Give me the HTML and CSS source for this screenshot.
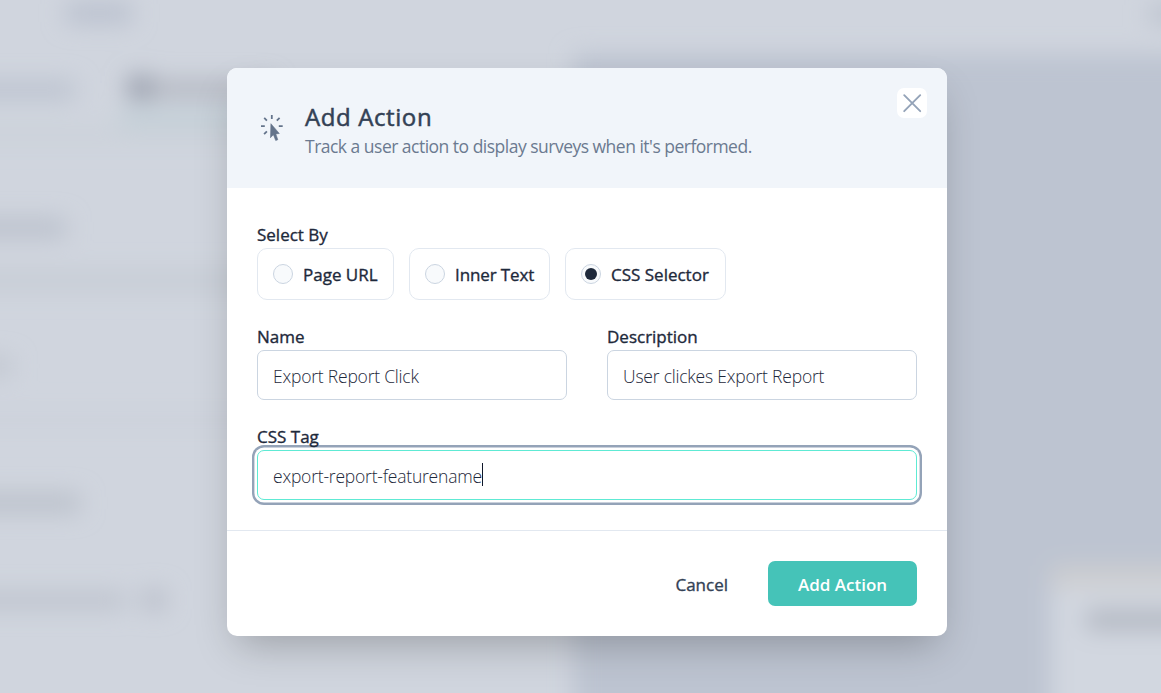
FILE: index.html
```html
<!DOCTYPE html>
<html lang="en">
<head>
<meta charset="utf-8">
<title>Add Action</title>
<link rel="stylesheet" href="styles.css">
</head>
<body>
<svg class="backdrop" viewBox="0 0 1161 693" aria-hidden="true">
  <defs>
    <filter id="soft" x="-20%" y="-20%" width="140%" height="140%"><feGaussianBlur stdDeviation="11.5"/></filter>
  </defs>
  <rect width="1161" height="693" fill="#d0d5de"/>
  <g filter="url(#soft)">
    <rect x="574" y="54" width="700" height="760" fill="#bdc4d1"/>
    <rect x="66" y="3" width="66" height="20" fill="#b9c0ce"/>
    <rect x="1150" y="4" width="50" height="20" fill="#bcc2ce"/>
    <rect x="-40" y="81" width="115" height="18" fill="#bbc2cf"/>
    <rect x="128" y="76" width="24" height="24" fill="#979dab"/>
    <rect x="152" y="80" width="120" height="18" fill="#b3b7c1"/>
    <rect x="120" y="112" width="140" height="12" fill="#becdd5"/>
    <rect x="-40" y="128" width="600" height="14" fill="#cbd1d9"/>
    <rect x="-40" y="219" width="106" height="18" fill="#b9bfcb"/>
    <rect x="-40" y="270" width="600" height="22" fill="#c7cdd6"/>
    <rect x="-40" y="358" width="52" height="16" fill="#bfc4ce"/>
    <rect x="-40" y="410" width="600" height="20" fill="#cdd2db"/>
    <rect x="-40" y="494" width="120" height="18" fill="#b9bfc9"/>
    <rect x="-40" y="592" width="166" height="17" fill="#bec3cd"/>
    <rect x="142" y="590" width="24" height="20" fill="#b9bec9"/>
    <rect x="1051" y="572" width="160" height="180" fill="#d2d7e0"/>
    <rect x="1051" y="566" width="160" height="22" fill="#cdced0"/>
    <rect x="1086" y="610" width="112" height="20" fill="#b0b5bf"/>
  </g>
</svg>
<main class="stage">
  <section class="modal" role="dialog" aria-labelledby="title">
    <header class="header">
      <svg class="click-icon" viewBox="0 0 24 28" aria-hidden="true">
        <path class="rays" d="M11.8 1v4M4.2 3.9l2.7 2.8M19.6 3.9l-2.8 2.8M1 12.2h3.8M18.8 12.2h3.9M6.9 17.4l-2.8 2.8"/>
        <path class="pointer" d="M10.9 9.7l8.4 9.8-3.5.4 2 5.8-2.1.8-2.3-5.8-2.9 3z"/>
      </svg>
      <div class="heading">
        <h1 class="title" id="title">Add Action</h1>
        <p class="subtitle">Track a user action to display surveys when it's performed.</p>
      </div>
      <button class="close" aria-label="Close"><svg viewBox="0 0 30 30"><path d="M7.2 7.2l16 16M23.2 7.2l-16 16"/></svg></button>
    </header>
    <div class="body">
      <div class="label">Select By</div>
      <div class="options">
        <div class="option opt-url"><span class="radio"></span><span>Page URL</span></div>
        <div class="option opt-text"><span class="radio"></span><span>Inner Text</span></div>
        <div class="option opt-css"><span class="radio checked"></span><span>CSS Selector</span></div>
      </div>
      <div class="fields">
        <div class="field"><div class="label">Name</div><div class="input">Export Report Click</div></div>
        <div class="field"><div class="label">Description</div><div class="input">User clickes Export Report</div></div>
        <div class="field wide"><div class="label">CSS Tag</div><div class="input focused"><span>export-report-featurename</span><i class="caret"></i></div></div>
      </div>
    </div>
    <footer class="footer">
      <button class="cancel">Cancel</button>
      <button class="submit">Add Action</button>
    </footer>
  </section>
</main>
</body>
</html>
```
FILE: styles.css
```css
* { box-sizing: border-box; }
body { margin: 0; width: 1161px; height: 693px; overflow: hidden; font-family: "Open Sans", "Noto Sans", sans-serif; color: #1e293b; }
button { font: inherit; border: 0; padding: 0; background: none; }
.backdrop { position: absolute; inset: 0; width: 1161px; height: 693px; z-index: -1; }
.stage { padding: 68px 0 0 227px; }
.modal { width: 720px; height: 568px; border-radius: 10px; background: #fff; overflow: hidden; box-shadow: 0 18px 38px -10px rgba(0, 0, 0, .25); display: flex; flex-direction: column; }
.header { height: 120px; background: #f1f5fa; display: flex; align-items: flex-start; padding: 20px 20px 0 33px; }
.click-icon { width: 24px; height: 28px; margin-top: 26px; flex: none; }
.rays { fill: none; stroke: #64748b; stroke-width: 1.8; }
.pointer { fill: #64748b; stroke: #64748b; stroke-width: .6; }
.heading { margin: 13px 0 0 21px; flex: 1; white-space: nowrap; }
.title { margin: 0; font-size: 24px; line-height: 32px; font-weight: 400; -webkit-text-stroke: .5px; color: #334155; letter-spacing: .6px; }
.subtitle { margin: 1px 0 0; font-size: 17.5px; line-height: 25px; font-weight: 400; color: #6b7a90; letter-spacing: -.51px; }
.close { width: 30px; height: 30px; border-radius: 7px; background: #fff; flex: none; }
.close svg { display: block; width: 30px; height: 30px; fill: none; stroke: #94a3b8; stroke-width: 1.9; stroke-linecap: round; }
.body { height: 342px; padding: 35px 30px 0; }
.label { height: 25px; line-height: 23px; font-size: 17px; -webkit-text-stroke: .35px; white-space: nowrap; letter-spacing: 0; }
.options { display: flex; gap: 15px; }
.option { height: 52px; border: 1px solid #e2e8f0; border-radius: 10px; display: flex; align-items: center; padding-left: 15px; font-size: 17px; -webkit-text-stroke: .35px; white-space: nowrap; letter-spacing: 0; }
.opt-url { width: 137px; }
.opt-text { width: 141px; letter-spacing: -.12px; }
.opt-css { width: 161px; }
.radio { width: 20px; height: 20px; border: 1px solid #cbd5e1; border-radius: 50%; background: #f8fafc; margin-right: 10px; flex: none; display: grid; place-items: center; }
.checked::after { content: ""; width: 12px; height: 12px; border-radius: 50%; background: #1e293b; }
.fields { display: grid; grid-template-columns: 310px 310px; column-gap: 40px; row-gap: 25px; margin-top: 25px; }
.wide { grid-column: 1 / -1; }
.input { height: 50px; border: 1px solid #cbd5e1; border-radius: 7px; background: #fff; padding: 2px 15px 0; display: flex; align-items: center; font-size: 17.5px; font-weight: 300; white-space: nowrap; letter-spacing: -.21px; }
.focused { border-color: #5eead4; box-shadow: 0 0 0 2.6px #fff, 0 0 0 5px #94a3b8; }
.caret { width: 1px; height: 23px; margin-top: -3px; background: #0f172a; }
.footer { flex: 1; border-top: 1px solid #e2e8f0; display: flex; justify-content: flex-end; padding: 30px 30px 0; font-size: 17px; }
.cancel { height: 47px; margin-right: 40px; color: #334155; -webkit-text-stroke: .35px; letter-spacing: 0; }
.submit { width: 149px; height: 45px; padding-top: 2px; border-radius: 7px; background: #45c3b8; color: #fff; font-weight: 600; letter-spacing: 0; }
```
